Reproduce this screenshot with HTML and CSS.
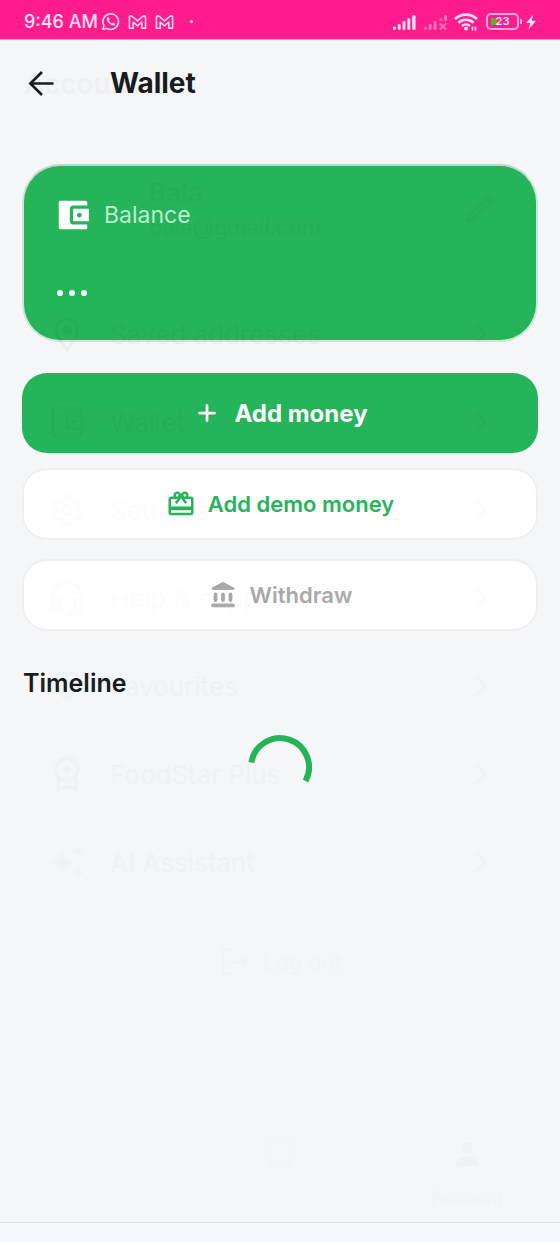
FILE: index.html
```html
<!DOCTYPE html>
<html lang="en">
<head>
<meta charset="utf-8">
<meta name="viewport" content="width=device-width, initial-scale=1">
<title>Wallet</title>
<link rel="stylesheet" href="styles.css">
</head>
<body>
<svg class="defs" aria-hidden="true">
  <symbol id="chevron" viewBox="0 0 24 24"><path d="M8.500 5l7 7-7 7" fill="none" stroke="currentColor" stroke-width="2"/></symbol>
  <symbol id="mail" viewBox="0 0 20 16"><path d="M1.500 14.500V3.200C1.500 1.200 3.400 .9 4.600 2.200L10 6.800l5.400-4.600C16.600 .9 18.500 1.200 18.500 3.200V14.500h-4V8.200l-4.500 3.800-4.500-3.800v6.300z" fill="none" stroke="currentColor" stroke-width="1.600" stroke-linejoin="round"/></symbol>
</svg>
<div class="app">
  <div class="status">
    <div class="status-side">
      <span class="clock">9:46 AM</span>
      <svg class="chat" viewBox="0 0 20 20" fill="none" stroke="currentColor"><path d="M2 18.300l1.100-4.200a8.200 8.200 0 1 1 3.100 3.100z" stroke-width="1.600" stroke-linejoin="round"/><path d="M6.800 5.500c-1.600 1.600-.5 4.200 1.700 6.300s4.700 3.100 6.100 1.600c.6-.7.300-1.300-.3-1.600l-1.500-.7-1.100 1.100c-1.600-.6-2.800-1.800-3.500-3.400l.9-1.100-.7-1.700c-.4-.8-1-1-1.600-.5z" fill="currentColor" stroke="none"/></svg>
      <svg class="mail"><use href="#mail"/></svg>
      <svg class="mail"><use href="#mail"/></svg>
      <i class="more"></i>
    </div>
    <div class="status-side end">
      <svg class="signal" viewBox="0 0 26 18" fill="currentColor"><rect x="1" y="14" width="3" height="3" rx="1"/><rect x="6" y="11" width="3" height="6" rx="1"/><rect x="11" y="8" width="3" height="9" rx="1"/><rect x="16" y="5" width="3" height="12" rx="1"/><rect x="21" y="2" width="3.500" height="15" rx="1"/></svg>
      <svg class="signal weak" viewBox="0 0 26 18" fill="currentColor"><rect x="1" y="14" width="3" height="3" rx="1"/><rect x="6" y="11" width="3" height="6" rx="1"/><rect x="11" y="8" width="3" height="9" rx="1"/><rect x="17" y="5" width="3" height="3" rx="1"/><rect x="22" y="2" width="3" height="6" rx="1"/><path d="M17.500 10.500l6.500 6.500m0-6.500l-6.500 6.500" stroke="currentColor" stroke-width="2"/></svg>
      <svg class="wifi" viewBox="0 0 24 18" fill="none" stroke="currentColor" stroke-width="2.600"><path d="M1 6a16 16 0 0 1 22 0M4.500 9.700a11 11 0 0 1 15 0M8 13a6 6 0 0 1 8 0"/><circle cx="12" cy="15.500" r="2" fill="currentColor" stroke="none"/><path d="M18.500 17.500v-4m3 0v4" stroke-width="1.600"/></svg>
      <span class="battery"><span class="charge">23</span></span>
      <svg class="bolt" viewBox="0 0 10 16" fill="currentColor"><path d="M7 1L0 9h4.300L2.500 15.500 10 6.800H5.700z"/></svg>
    </div>
  </div>

  <div class="screen">
    <header class="topbar">
      <button class="back" aria-label="Back"><svg viewBox="0 0 28 28" fill="none" stroke="currentColor" stroke-width="2.800"><path d="M26.500 14H3M14.500 2L2.500 14l12 12"/></svg></button>
      <h1>Wallet</h1>
    </header>
    <main>
      <section class="card">
        <div class="balance">
          <svg viewBox="0 0 24 24" fill="currentColor"><path d="M21 18v2a1 1 0 0 1-1 1H4a1 1 0 0 1-1-1V4a1 1 0 0 1 1-1h16a1 1 0 0 1 1 1v2h-9c-1.110 0-2 .9-2 2v8c0 1.100.89 2 2 2h9zm-9-2h10V8H12v8zm4-2.500c-.83 0-1.500-.67-1.500-1.500s.67-1.500 1.500-1.500 1.500.67 1.500 1.500-.67 1.500-1.500 1.500z"/></svg>
          <span>Balance</span>
        </div>
        <div class="dots" role="status" aria-label="Loading balance"><i></i><i></i><i></i></div>
      </section>
      <div class="actions">
        <button class="btn primary"><svg viewBox="0 0 24 24" fill="none" stroke="currentColor" stroke-width="2.200" stroke-linecap="round"><path d="M12 6v12M6 12h12"/></svg>Add money</button>
        <button class="btn outline"><svg viewBox="0 0 24 24" fill="currentColor"><path d="M20 6h-2.180c.11-.31.18-.65.18-1 0-1.660-1.340-3-3-3-1.050 0-1.960.54-2.500 1.350l-.5.67-.5-.68C10.960 2.540 10.050 2 9 2 7.340 2 6 3.340 6 5c0 .35.07.69.18 1H4c-1.110 0-1.990.89-1.990 2L2 19c0 1.110.89 2 2 2h16c1.110 0 2-.89 2-2V8c0-1.110-.89-2-2-2zm-5-2c.55 0 1 .45 1 1s-.45 1-1 1-1-.45-1-1 .45-1 1-1zM9 4c.55 0 1 .45 1 1s-.45 1-1 1-1-.45-1-1 .45-1 1-1zm11 15H4v-2h16v2zm0-5H4V8h5.080L7 10.830 8.620 12 11 8.760l1-1.360 1 1.360L15.380 12 17 10.830 14.920 8H20v6z"/></svg>Add demo money</button>
        <button class="btn outline" disabled><svg viewBox="0 0 24 24" fill="currentColor"><path d="M11.400 1.800q.6-.3 1.200 0l8 4.200c1 .6.600 2-.4 2H3.800c-1 0-1.400-1.400-.4-2z"/><rect x="4.500" y="10" width="3" height="7.500" rx="1.500"/><rect x="10.500" y="10" width="3" height="7.500" rx="1.500"/><rect x="16.500" y="10" width="3" height="7.500" rx="1.500"/><rect x="2.500" y="18.800" width="19" height="3" rx="1.500"/></svg>Withdraw</button>
      </div>
      <h2>Timeline</h2>
      <svg class="spinner" viewBox="0 0 64 64" role="img" aria-label="Loading"><path d="M3.400 27.500A29 29 0 1 1 57.500 46" fill="none" stroke="currentColor" stroke-width="6"/></svg>
    </main>

    <!-- Outgoing account screen, at the end of its fade -->
    <div class="account" aria-hidden="true">
      <div class="account-title">Account</div>
      <div class="profile">
        <div class="profile-text"><b>Bala</b><span>bala@gmail.com</span></div>
        <svg viewBox="0 0 24 24" fill="none" stroke="currentColor" stroke-width="2"><path d="M4 20.500l.5-3L14.500 7.500l2.300 2.300L7 20z"/><path d="M17 5l2.500 2.500L21 6l-2.500-2.500z" fill="currentColor"/></svg>
      </div>
      <div class="row"><svg viewBox="0 0 24 24" fill="none" stroke="currentColor" stroke-width="2"><path d="M12 22c4-5 7-8.500 7-12.500a7 7 0 0 0-14 0C5 13.500 8 17 12 22z"/><circle cx="12" cy="9.500" r="2" fill="currentColor"/></svg><span>Saved addresses</span><svg class="go"><use href="#chevron"/></svg></div>
      <div class="row"><svg viewBox="0 0 24 24" fill="none" stroke="currentColor" stroke-width="2"><rect x="3" y="3" width="18" height="18" rx="2"/><rect x="12" y="8" width="10" height="8" rx="1"/><circle cx="16" cy="12" r="1"/></svg><span>Wallet</span><svg class="go"><use href="#chevron"/></svg></div>
      <div class="row faint"><svg viewBox="0 0 24 24" fill="none" stroke="currentColor" stroke-width="2"><path d="M10.500 3h3l.6 2.600L16.500 7l2.600-.8 1.500 2.600-2 1.900v2.600l2 1.900-1.500 2.600-2.600-.8-2.400 1.400-.6 2.600h-3l-.6-2.600L7.500 17l-2.600.8-1.500-2.600 2-1.900v-2.600l-2-1.900 1.500-2.600 2.600.8 2.400-1.400z"/><circle cx="12" cy="12" r="3"/></svg><span>Settings</span><svg class="go"><use href="#chevron"/></svg></div>
      <div class="row faint"><svg viewBox="0 0 24 24" fill="none" stroke="currentColor" stroke-width="2"><path d="M3 13v-2a9 9 0 0 1 18 0v11h-9M4 13h3v6H3v-6zm13 0h4v6h-4z"/></svg><span>Help &amp; support</span><svg class="go"><use href="#chevron"/></svg></div>
      <div class="row dim"><svg viewBox="0 0 24 24" fill="none" stroke="currentColor" stroke-width="2"><path d="M12 20C-3 10 7-1 12 6c5-7 15 4 0 14z"/></svg><span>Favourites</span><svg class="go"><use href="#chevron"/></svg></div>
      <div class="row dim"><svg viewBox="0 0 24 24" fill="none" stroke="currentColor" stroke-width="2"><circle cx="12" cy="9" r="7"/><path d="M6.500 14v8l5.500-2 5.500 2v-8"/><path d="M12 6l1 2 2 .3-1.500 1.500.4 2.200-1.900-1-1.900 1 .4-2.200L9 8.300l2-.3z" fill="currentColor" stroke="none"/></svg><span>FoodStar Plus</span><svg class="go"><use href="#chevron"/></svg></div>
      <div class="row dim"><svg viewBox="0 0 24 24" fill="currentColor"><path d="M9 5l2 5 5 2-5 2-2 5-2-5-5-2 5-2zM19 2l1 2 2 1-2 1-1 2-1-2-2-1 2-1zM19 16l1 2 2 1-2 1-1 2-1-2-2-1 2-1z"/></svg><span>AI Assistant</span><svg class="go"><use href="#chevron"/></svg></div>
      <div class="logout"><svg viewBox="0 0 24 24" fill="none" stroke="currentColor" stroke-width="2"><path d="M11 3H3v18h8M8 12h13m-4-4l4 4-4 4"/></svg><span>Log out</span></div>
      <div class="tabs">
        <div></div>
        <div class="orders"><svg viewBox="0 0 24 24" fill="none" stroke="currentColor" stroke-width="1"><path d="M5 3h14v18H5zM8 8h8m-8 4h8m-8 4h8"/></svg></div>
        <div class="current"><svg viewBox="0 0 24 24" fill="currentColor"><circle cx="12" cy="8" r="4"/><path d="M4 20c0-8 16-8 16 0z"/></svg><span>Account</span></div>
      </div>
    </div>
  </div>
  <div class="gesture"></div>
</div>
</body>
</html>
```
FILE: styles.css
```css
* { box-sizing: border-box; }
body { margin: 0; font-family: Inter, Roboto, sans-serif; color: #191c1d; background: #f4f6f8; }
button { font: inherit; border: 0; background: none; padding: 0; }
svg { display: block; flex: none; }
.defs { position: absolute; width: 0; height: 0; }
.app { min-height: 100vh; display: flex; flex-direction: column; }

.status {
  height: 40px; padding: 4px 24px 0; flex: none;
  display: flex; align-items: center; justify-content: space-between;
  background: #ff1c8f; color: #ffe0f1; border-bottom: 1px solid #ff9fd2;
}
.status-side { display: flex; align-items: center; gap: 8px; }
.status-side.end { gap: 6px; }
.clock { font-size: 18px; font-weight: 500; margin-right: -5px; }
.chat { width: 19px; height: 19px; }
.mail { width: 19px; height: 16px; }
.more { width: 3px; height: 3px; margin-left: 8px; border-radius: 50%; background: currentColor; }
.signal { width: 25px; height: 18px; }
.weak { opacity: .45; }
.wifi { width: 24px; height: 18px; }
.battery {
  width: 33px; height: 17px; margin: 0 1px 0 2px; position: relative;
  border: 2px solid #ffa9d6; border-radius: 5px;
  display: flex; align-items: center; justify-content: center;
  background: linear-gradient(#62b022, #62b022) 3px 3px / 6px 7px no-repeat;
}
.battery::after { content: ""; position: absolute; right: -5px; top: 4px; width: 2px; height: 5px; background: #ffa9d6; }
.charge { font-size: 11px; line-height: 13px; font-weight: 600; }
.bolt { width: 10px; height: 16px; }

.screen { flex: 1; position: relative; }
.topbar { height: 86px; padding: 0 28px; display: flex; align-items: center; gap: 55px; }
.back { color: inherit; }
.back svg { width: 27px; height: 27px; }
h1 { margin: 0; font-size: 28px; line-height: 36px; font-weight: 700; }
main { padding: 38px 22px 24px; display: flex; flex-direction: column; }
.card {
  height: 178px; padding: 30px; border-radius: 38px;
  background: #25b45a; border: 2px solid #c9e8d6; border-top-color: #c3d5ca;
  display: flex; flex-direction: column; gap: 56px;
}
.balance { display: flex; align-items: center; gap: 12px; color: #fff; font-size: 23px; line-height: 38px; }
.balance svg { width: 38px; height: 38px; }
.balance span { color: #bdebcf; }
.dots { display: flex; gap: 6px; padding-left: 3px; }
.dots i { width: 6px; height: 6px; border-radius: 50%; background: #fff; }
.actions { display: flex; flex-direction: column; gap: 19px; margin-top: 31px; }
.btn {
  width: 100%; height: 72px; border-radius: 25px;
  display: flex; align-items: center; justify-content: center; gap: 12px;
  font-size: 22px; font-weight: 600;
}
.btn svg { width: 30px; height: 30px; }
.primary { height: 80px; margin-bottom: -4px; background: #25b45a; color: #fff; font-size: 24px; font-weight: 700; }
.outline { background: #fff; border: 2px solid #edeff3; color: #25b45a; }
.outline:disabled { color: #a9a9a9; }
h2 { margin: 36px 1px; font-size: 25px; line-height: 32px; font-weight: 600; }
.spinner { width: 64px; height: 64px; align-self: center; color: #25b45a; }

.account {
  position: absolute; inset: 0; padding: 0 24px; pointer-events: none;
  display: flex; flex-direction: column;
  color: #002e10; opacity: .03; font-size: 26px;
}
.account-title { height: 88px; line-height: 88px; font-size: 28px; font-weight: 600; opacity: .7; }
.profile { height: 162px; padding: 0 40px 0 125px; display: flex; align-items: center; justify-content: space-between; }
.profile-text { display: flex; flex-direction: column; }
.profile-text b { font-size: 26px; line-height: 36px; font-weight: 600; }
.profile-text span { font-size: 22px; line-height: 32px; }
.profile svg { width: 34px; height: 34px; }
.row { height: 88px; padding: 0 40px 0 24px; display: flex; align-items: center; gap: 24px; }
.row svg { width: 38px; height: 38px; }
.row span { flex: 1; }
.row .go { width: 30px; height: 30px; }
.faint { opacity: .3; }
.dim { opacity: .5; }
.logout { height: 112px; display: flex; align-items: center; justify-content: center; gap: 12px; opacity: .25; font-size: 22px; }
.logout svg { width: 32px; height: 32px; }
.tabs { margin: auto -24px 6px; height: 80px; display: grid; grid-template-columns: repeat(3, 1fr); font-size: 18px; line-height: 24px; font-weight: 500; }
.tabs div { display: flex; flex-direction: column; align-items: center; gap: 14px; opacity: .15; }
.tabs .current { opacity: .5; }
.tabs span { opacity: .5; }
.tabs svg { width: 36px; height: 36px; }
.gesture { height: 20px; background: #f7f9ff; border-top: 1px solid #e0e2ec; flex: none; }
```
